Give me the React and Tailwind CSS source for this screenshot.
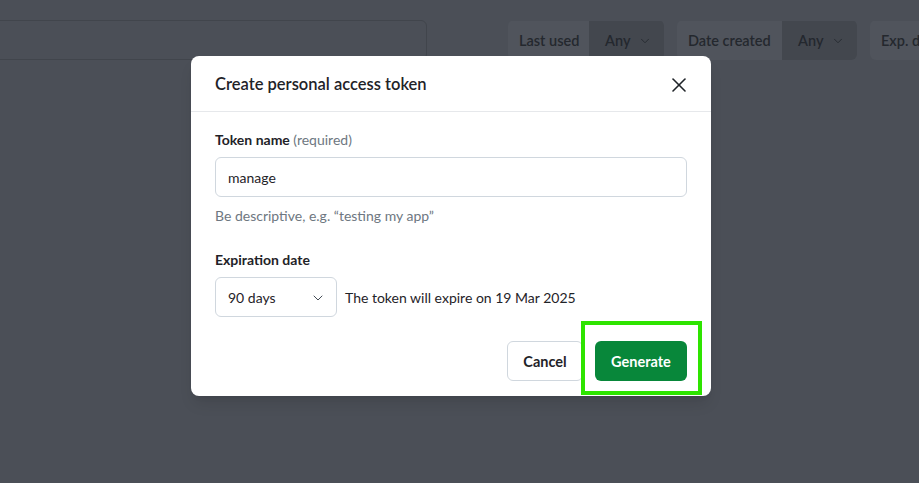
import { ChevronDown, X } from "lucide-react";

const filters = [
  { label: "Last used", value: "Any", w: "w-[81px]" },
  { label: "Date created", value: "Any", w: "w-[105px]" },
  { label: "Exp. date", value: "Any", w: "w-[90px]" },
];

export default function App() {
  return (
    <div
      className="relative h-[483px] w-[919px] overflow-hidden bg-[#4b4f57] text-[#1f2328]"
      style={{ fontFamily: "Lato, 'Noto Sans', sans-serif" }}
    >
      {/* Dimmed page behind the dialog */}
      <div className="flex items-center gap-[13px] pt-5">
        <div className="-ml-4 mr-[68px] h-10 w-[443px] shrink-0 rounded-md border border-[#41454c]" />
        {filters.map((f) => (
          <div key={f.label} className="flex h-10 shrink-0 overflow-hidden rounded-md pt-px text-[14.5px] font-semibold text-[#24282e]">
            <div className={`flex items-center bg-[#50545c] pl-[11px] ${f.w}`}>{f.label}</div>
            <div className="flex w-[75px] items-center gap-2 bg-[#43474e] pl-4">
              {f.value}
              <ChevronDown size={14} strokeWidth={1.5} />
            </div>
          </div>
        ))}
      </div>

      {/* Dialog */}
      <div className="absolute left-[191px] top-[56px] w-[520px] rounded-lg bg-white shadow-lg">
        <div className="flex h-14 items-center justify-between border-b border-[#e6e8eb] pt-0.5 pr-5 pl-6">
          <h2 className="text-[16.5px] font-semibold text-[#1f2328]">Create personal access token</h2>
          <button className="flex h-6 w-6 items-center justify-center text-[#1f2328]" aria-label="Close">
            <X size={24} strokeWidth={1.6} />
          </button>
        </div>

        <div className="px-6 pt-[18px] pb-[15px]">
          <label className="block text-[14px] leading-5 font-bold text-[#1f2328]">
            Token name <span className="font-normal text-[#6e7781]">(required)</span>
          </label>
          <div className="mt-[7px] flex h-10 items-center rounded-md border border-[#d0d7de] px-3 pt-px text-[14px] text-[#1f2328]">
            manage
          </div>
          <p className="mt-[9px] text-[14px] leading-5 text-[#6e7781]">Be descriptive, e.g. “testing my app”</p>

          <label className="mt-6 block text-[14px] leading-5 font-bold text-[#1f2328]">Expiration date</label>
          <div className="mt-[7px] flex items-center gap-2">
            <div className="flex h-10 w-[122px] items-center justify-between rounded-md border border-[#d0d7de] pt-px pr-[10px] pl-3 text-[14px]">
              90 days
              <ChevronDown size={16} strokeWidth={1.5} className="text-[#444c56]" />
            </div>
            <span className="text-[14px] text-[#1f2328]">The token will expire on 19 Mar 2025</span>
          </div>

          <div className="mt-6 flex justify-end gap-3">
            <button className="h-10 w-[76px] rounded-md border border-[#d0d7de] bg-white pt-px text-[14.5px] font-bold text-[#1f2328]">
              Cancel
            </button>
            <div className="relative">
              <button className="h-10 w-[92px] rounded-md bg-[#08873a] pt-px text-[14.5px] font-bold text-white">
                Generate
              </button>
              <div className="pointer-events-none absolute -top-5 -right-[15px] -bottom-[14px] -left-[14px] border-4 border-[#2ee400]" />
            </div>
          </div>
        </div>
      </div>
    </div>
  );
}
